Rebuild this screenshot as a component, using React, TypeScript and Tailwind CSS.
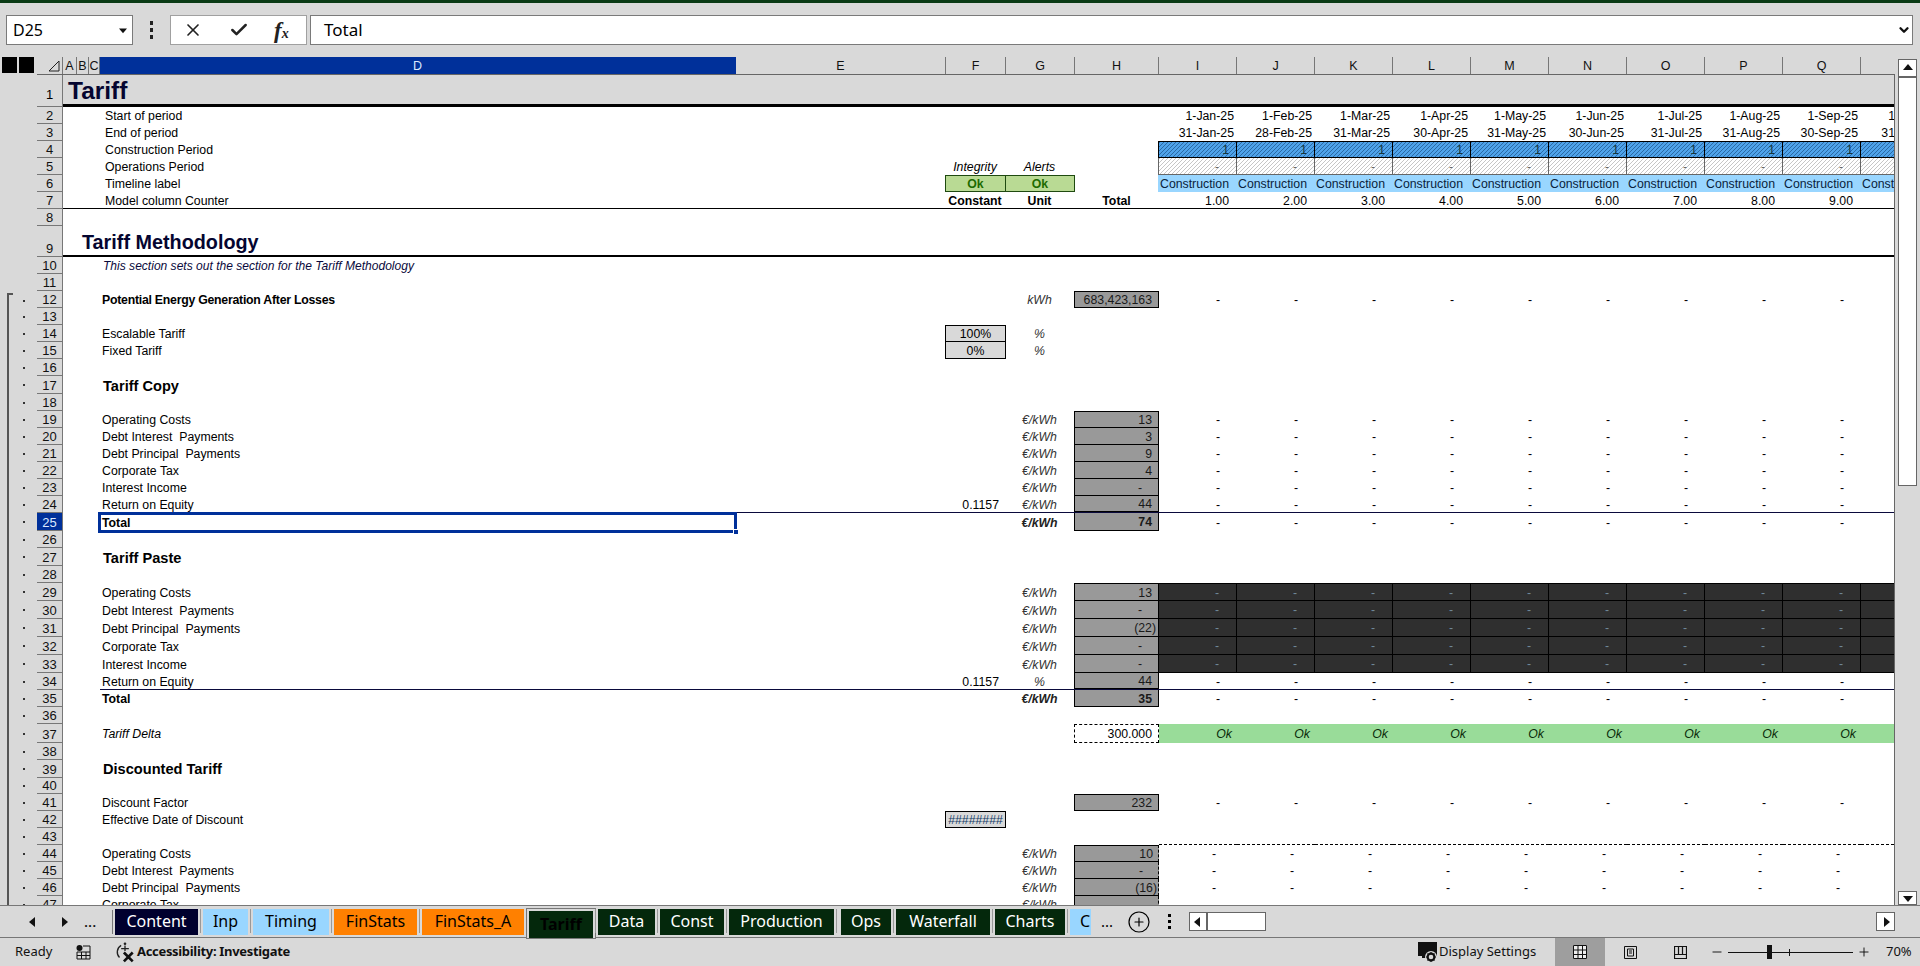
import React from 'react';
import { Check, ChevronDown, CirclePlus, Minus, Plus, X } from 'lucide-react';

const arial = "font-['Liberation_Sans',Arial,sans-serif]";
const segoe = "font-['Noto_Sans',sans-serif]";

const cols = ['I', 'J', 'K', 'L', 'M', 'N', 'O', 'P', 'Q', 'R'];
const starts = ['1-Jan-25', '1-Feb-25', '1-Mar-25', '1-Apr-25', '1-May-25', '1-Jun-25', '1-Jul-25', '1-Aug-25', '1-Sep-25', '1-Oct-25'];
const ends = ['31-Jan-25', '28-Feb-25', '31-Mar-25', '30-Apr-25', '31-May-25', '30-Jun-25', '31-Jul-25', '31-Aug-25', '30-Sep-25', '31-Oct-25'];

// timeline cell variants
type Tl = 'start' | 'end' | 'con' | 'ops' | 'label' | 'count' | 'dash' | 'dash2' | 'dark' | 'darkTop' | 'ok' | 'dashLine';

type RowDef = {
  n: number;
  h?: string;
  label?: string;
  labelCls?: string;
  f?: string;
  fCls?: string;
  g?: string;
  gCls?: string;
  hv?: string;
  hCls?: string;
  tl?: Tl;
  full?: string; // line across row from col A
  part?: string; // line across row from col D
};

const unit = 'italic text-[#333333] justify-center';
const unitB = 'italic font-bold text-[#222222] justify-center';
const box = 'bg-[#999999] border-x border-b border-black justify-end pr-[6px] text-[#1a1a1a]';
const boxT = 'bg-[#999999] border border-black justify-end pr-[6px] text-[#1a1a1a]';
const boxDash = 'bg-[#999999] border-l border-b border-black justify-end pr-[6px] text-[#1a1a1a]';
const dashH = '!pr-[16px]';
const inp = 'bg-[#d9d9d9] border-x border-b border-black justify-center !w-[61px] -mr-[1px]';
const inpT = 'bg-[#d9d9d9] border border-black justify-center !w-[61px] -mr-[1px]';
const okBox = 'bg-[#b9da94] border border-[#1f4a10] justify-center font-bold text-[#1d6b00]';
const plain = 'pl-[2px]';
const bold = 'pl-[2px] font-bold';
const head = 'pl-[3px] font-bold text-[14.6px] text-black';
const top = 'pl-[5px]';

const rows: RowDef[] = [
  { n: 2, label: 'Start of period', labelCls: top, tl: 'start' },
  { n: 3, label: 'End of period', labelCls: top, tl: 'end' },
  { n: 4, label: 'Construction Period', labelCls: top, tl: 'con' },
  { n: 5, label: 'Operations Period', labelCls: top, f: 'Integrity', fCls: 'italic justify-center', g: 'Alerts', gCls: 'italic justify-center', tl: 'ops' },
  { n: 6, label: 'Timeline label', labelCls: top, f: 'Ok', fCls: okBox + ' !w-[61px] -mr-[1px]', g: 'Ok', gCls: okBox + ' border-l-0 ml-[1px] -mr-[1px]', tl: 'label' },
  { n: 7, label: 'Model column Counter', labelCls: top, f: 'Constant', fCls: 'font-bold justify-center', g: 'Unit', gCls: 'font-bold justify-center', hv: 'Total', hCls: 'font-bold justify-center', tl: 'count', full: 'border-b border-black' },
  { n: 8 },
  { n: 9, h: 'h-[31px]', label: 'Tariff Methodology', labelCls: '-ml-[18px] !pt-[5px] font-bold text-[19.8px] text-[#050530]', full: 'border-b-2 border-black' },
  { n: 10, label: 'This section sets out the section for the Tariff Methodology', labelCls: 'pl-[3px] italic text-[12.05px] text-[#0a0a3c]' },
  { n: 11 },
  { n: 12, label: 'Potential Energy Generation After Losses', labelCls: bold + ' tracking-[-0.25px]', g: 'kWh', gCls: unit, hv: '683,423,163', hCls: boxT, tl: 'dash' },
  { n: 13 },
  { n: 14, label: 'Escalable Tariff', labelCls: plain, f: '100%', fCls: inpT, g: '%', gCls: unit },
  { n: 15, label: 'Fixed Tariff', labelCls: plain, f: '0%', fCls: inp, g: '%', gCls: unit },
  { n: 16 },
  { n: 17, h: 'h-[18px]', label: 'Tariff Copy', labelCls: head + ' !pt-[4px]' },
  { n: 18 },
  { n: 19, label: 'Operating Costs', labelCls: plain, g: '€/kWh', gCls: unit, hv: '13', hCls: boxT, tl: 'dash' },
  { n: 20, label: 'Debt Interest  Payments', labelCls: plain, g: '€/kWh', gCls: unit, hv: '3', hCls: box, tl: 'dash' },
  { n: 21, label: 'Debt Principal  Payments', labelCls: plain, g: '€/kWh', gCls: unit, hv: '9', hCls: box, tl: 'dash' },
  { n: 22, label: 'Corporate Tax', labelCls: plain, g: '€/kWh', gCls: unit, hv: '4', hCls: box, tl: 'dash' },
  { n: 23, label: 'Interest Income', labelCls: plain, g: '€/kWh', gCls: unit, hv: '-', hCls: box + ' ' + dashH, tl: 'dash' },
  { n: 24, label: 'Return on Equity', labelCls: plain, f: '0.1157', fCls: 'justify-end pr-[6px]', g: '€/kWh', gCls: unit, hv: '44', hCls: box, tl: 'dash', part: 'border-b border-[#0a0a3c]' },
  { n: 25, h: 'h-[18px]', label: 'Total', labelCls: bold, g: '€/kWh', gCls: unitB, hv: '74', hCls: box + ' font-bold', tl: 'dash' },
  { n: 26 },
  { n: 27, h: 'h-[18px]', label: 'Tariff Paste', labelCls: head + ' !pt-[4px]' },
  { n: 28 },
  { n: 29, h: 'h-[18px]', label: 'Operating Costs', labelCls: plain, g: '€/kWh', gCls: unit, hv: '13', hCls: boxT, tl: 'darkTop' },
  { n: 30, h: 'h-[18px]', label: 'Debt Interest  Payments', labelCls: plain, g: '€/kWh', gCls: unit, hv: '-', hCls: box + ' ' + dashH, tl: 'dark' },
  { n: 31, h: 'h-[18px]', label: 'Debt Principal  Payments', labelCls: plain, g: '€/kWh', gCls: unit, hv: '(22)', hCls: box + ' !pr-[2px]', tl: 'dark' },
  { n: 32, h: 'h-[18px]', label: 'Corporate Tax', labelCls: plain, g: '€/kWh', gCls: unit, hv: '-', hCls: box + ' ' + dashH, tl: 'dark' },
  { n: 33, h: 'h-[18px]', label: 'Interest Income', labelCls: plain, g: '€/kWh', gCls: unit, hv: '-', hCls: box + ' ' + dashH, tl: 'dark' },
  { n: 34, label: 'Return on Equity', labelCls: plain, f: '0.1157', fCls: 'justify-end pr-[6px]', g: '%', gCls: unit, hv: '44', hCls: box, tl: 'dash', part: 'border-b border-[#0a0a3c]' },
  { n: 35, label: 'Total', labelCls: bold, g: '€/kWh', gCls: unitB, hv: '35', hCls: box + ' font-bold', tl: 'dash' },
  { n: 36 },
  { n: 37, h: 'h-[19px]', label: 'Tariff Delta', labelCls: 'pl-[2px] italic', hv: '300.000', hCls: 'bg-white border border-dashed border-black justify-end pr-[6px]', tl: 'ok' },
  { n: 38 },
  { n: 39, h: 'h-[18px]', label: 'Discounted Tariff', labelCls: head },
  { n: 40, h: 'h-[16px]' },
  { n: 41, label: 'Discount Factor', labelCls: plain, hv: '232', hCls: boxT, tl: 'dash' },
  { n: 42, label: 'Effective Date of Discount', labelCls: plain, f: '########', fCls: inpT + ' text-[#123a66]' },
  { n: 43, tl: 'dashLine' },
  { n: 44, label: 'Operating Costs', labelCls: plain, g: '€/kWh', gCls: unit, hv: '10', hCls: boxDash + ' border-t', tl: 'dash2' },
  { n: 45, label: 'Debt Interest  Payments', labelCls: plain, g: '€/kWh', gCls: unit, hv: '-', hCls: boxDash + ' ' + dashH, tl: 'dash2' },
  { n: 46, label: 'Debt Principal  Payments', labelCls: plain, g: '€/kWh', gCls: unit, hv: '(16)', hCls: boxDash + ' !pr-[2px]', tl: 'dash2' },
  { n: 47, label: 'Corporate Tax', labelCls: plain, g: '€/kWh', gCls: unit, hCls: boxDash, tl: 'dash2' },
];

function TimelineCell({ kind, i }: { kind: Tl; i: number }) {
  const base = 'shrink-0 h-full flex items-center pt-[2px] whitespace-nowrap overflow-hidden';
  const w = 'w-[78px]';
  // first column reaches back over the H column's right edge
  const first = i === 0 ? 'w-[79px] -ml-[1px]' : 'w-[78px]';
  switch (kind) {
    case 'start':
      return <div className={`${base} ${w} justify-end pr-[3px] text-black`}>{starts[i]}</div>;
    case 'end':
      return <div className={`${base} ${w} justify-end pr-[3px] text-black`}>{ends[i]}</div>;
    case 'con':
      return (
        <div className={`${base} ${first} justify-end pr-[7px] text-[#17363c] border-y border-r border-black ${i === 0 ? 'border-l' : ''} bg-[repeating-linear-gradient(135deg,#2a6aa5_0,#2a6aa5_0.8px,#4fa3ea_0.8px,#4fa3ea_2.83px)]`}>
          1
        </div>
      );
    case 'ops':
      return (
        <div className={`${base} ${first} justify-end pr-[17px] text-[#666666] border-r border-b border-[#666666] ${i === 0 ? 'border-l' : ''} bg-[repeating-linear-gradient(135deg,#c6c6c6_0,#c6c6c6_0.8px,#ffffff_0.8px,#ffffff_2.83px)]`}>
          -
        </div>
      );
    case 'label':
      return <div className={`${base} ${first} ${i === 0 ? 'pl-[2px]' : 'pl-[1px]'} bg-[#99d6ff] text-[#0a1e3c]`}>Construction</div>;
    case 'count':
      return <div className={`${base} ${w} justify-end pr-[8px] text-black`}>{(i + 1).toFixed(2)}</div>;
    case 'dash':
      return <div className={`${base} ${w} justify-end pr-[17px] text-black`}>-</div>;
    case 'dash2':
      return <div className={`${base} ${first} justify-end pr-[21px] text-black ${i === 0 ? 'border-l border-dashed border-black' : ''}`}>-</div>;
    case 'dark':
      return <div className={`${base} ${w} justify-end pr-[17px] bg-[#2f2f2f] text-[#6f8797] border-r border-b border-black`}>-</div>;
    case 'darkTop':
      return <div className={`${base} ${w} justify-end pr-[17px] bg-[#2f2f2f] text-[#6f8797] border-r border-y border-black`}>-</div>;
    case 'ok':
      return <div className={`${base} ${w} justify-end pr-[5px] bg-[#99dc99] italic text-[#0a2a0a]`}>Ok</div>;
    case 'dashLine':
      return <div className={`${base} ${w} border-b border-dashed border-black`} />;
  }
}

function Row({ r }: { r: RowDef }) {
  const cell = 'shrink-0 h-full flex items-center pt-[2px] whitespace-nowrap';
  const selected = r.n === 25;
  return (
    <div className={`flex ${r.h ?? 'h-[17px]'}`}>
      <div className="w-[37px] shrink-0 bg-[#d9d9d9] pl-[7px]">
        {r.n >= 12 && (
          <div className={`relative border-l-2 border-[#555555] flex items-center pl-[14px] ${r.n === 12 ? 'h-[15px] mt-[2px]' : 'h-full'}`}>
            <div className="w-[2px] h-[2px] bg-[#333333]" />
            {r.n === 12 && <div className="absolute -left-[2px] top-0 w-[6px] h-[2px] bg-[#555555]" />}
          </div>
        )}
      </div>
      <div className={`w-[26px] shrink-0 flex items-end justify-center border-b border-r border-[#777777] text-[13px] leading-[15px] ${selected ? 'bg-[#00309a] text-[#dbe9ff]' : 'bg-[#d9d9d9] text-[#111111]'}`}>
        {r.n}
      </div>
      <div className={`flex-1 min-w-0 flex bg-white text-[12.3px] text-black ${r.full ?? ''}`}>
        <div className="w-[37px] shrink-0" />
        <div className={`flex flex-1 min-w-0 ${r.part ?? ''}`}>
          <div className={`${cell} w-[636px] relative whitespace-pre ${r.labelCls ?? ''}`}>
            {r.label}
            {selected && (
              <div className="absolute -left-[2px] -top-[1px] -right-[1px] -bottom-[2px] border-[3px] border-[#00309a] z-10">
                <div className="absolute -right-[5px] -bottom-[5px] w-[6px] h-[6px] bg-[#00309a] border border-white" />
              </div>
            )}
          </div>
          <div className={`${cell} w-[209px]`} />
          <div className={`${cell} w-[60px] ${r.fCls ?? ''}`}>{r.f}</div>
          <div className={`${cell} w-[69px] ${r.gCls ?? ''}`}>{r.g}</div>
          <div className={`${cell} w-[85px] ${r.hCls ?? ''}`}>{r.hv}</div>
          {r.tl && cols.map((c, i) => <TimelineCell key={c} kind={r.tl as Tl} i={i} />)}
        </div>
      </div>
    </div>
  );
}

function Tri({ dir, size = 8 }: { dir: 'l' | 'r' | 'u' | 'd'; size?: number }) {
  const pts = { l: '7,0 7,10 1,5', r: '3,0 3,10 9,5', u: '0,7 10,7 5,1', d: '0,3 10,3 5,9' }[dir];
  return (
    <svg width={size} height={size} viewBox="0 0 10 10">
      <polygon points={pts} fill="#111" />
    </svg>
  );
}

function ColHeader({ w, label, active }: { w: string; label: string; active?: boolean }) {
  return (
    <div className={`${w} shrink-0 h-full flex items-center justify-center pt-[2px] border-r ${active ? 'bg-[#00309a] text-[#dbe9ff] border-[#00309a]' : 'border-[#777777] text-[#111111]'}`}>
      {label}
    </div>
  );
}

function HeaderRow() {
  return (
    <div className={`flex h-[18px] text-[12.5px] ${arial}`}>
      <div className="w-[37px] shrink-0 flex pl-[2px] gap-[2px]">
        <div className="w-[15px] h-[16px] bg-black" />
        <div className="w-[15px] h-[16px] bg-black" />
      </div>
      <div className="flex flex-1 min-w-0 border-b border-[#666666] overflow-hidden">
        <div className="w-[26px] shrink-0 border-r border-[#777777] flex items-end justify-end pr-[2px] pb-[2px]">
          <svg width="12" height="12" viewBox="0 0 12 12">
            <path d="M11 1V11H1Z" fill="none" stroke="#222" strokeWidth="1" />
          </svg>
        </div>
        <ColHeader w="w-[14px]" label="A" />
        <ColHeader w="w-[12px]" label="B" />
        <ColHeader w="w-[11px]" label="C" />
        <ColHeader w="w-[636px]" label="D" active />
        <ColHeader w="w-[210px]" label="E" />
        <ColHeader w="w-[60px]" label="F" />
        <ColHeader w="w-[69px]" label="G" />
        <ColHeader w="w-[84px]" label="H" />
        {cols.slice(0, 9).map((c) => (
          <ColHeader key={c} w="w-[78px]" label={c} />
        ))}
      </div>
    </div>
  );
}

const tabs = [
  { t: 'Content', c: 'w-[83px] bg-[#00002e] text-white' },
  { t: 'Inp', c: 'w-[45px] bg-[#99d6ff] text-black' },
  { t: 'Timing', c: 'w-[76px] bg-[#99d6ff] text-black' },
  { t: 'FinStats', c: 'w-[83px] bg-[#ff8000] text-black' },
  { t: 'FinStats_A', c: 'w-[102px] bg-[#ff8000] text-black' },
  { t: 'Tariff', c: 'w-[68px] -ml-[2px] -mr-[2px] h-[29px] bg-[#04280c] text-black font-bold border-2 border-b-0 border-[#d9d9d9] outline outline-1 outline-[#777777]' },
  { t: 'Data', c: 'w-[57px] bg-[#04280c] text-white' },
  { t: 'Const', c: 'w-[64px] bg-[#04280c] text-white' },
  { t: 'Production', c: 'w-[105px] bg-[#04280c] text-white' },
  { t: 'Ops', c: 'w-[50px] ml-[2px] bg-[#04280c] text-white' },
  { t: 'Waterfall', c: 'w-[94px] bg-[#04280c] text-white' },
  { t: 'Charts', c: 'w-[70px] bg-[#04280c] text-white' },
  { t: 'C', c: 'w-[21px] bg-[#99d6ff] text-black pl-[10px] !justify-start overflow-hidden' },
];

function TabBar() {
  return (
    <div className={`h-[33px] shrink-0 flex items-center border-y border-[#777777] ${segoe}`}>
      <div className="w-[112px] shrink-0 h-full flex items-center text-[#111111]">
        <div className="ml-[28px] w-[8px]"><Tri dir="l" size={10} /></div>
        <div className="ml-[23px] w-[8px]"><Tri dir="r" size={10} /></div>
        <div className="ml-[17px] text-[15px] font-medium">...</div>
      </div>
      <div className="w-[1px] h-[24px] bg-[#777777] mr-[2px]" />
      <div className="flex items-start h-[26px] -mb-[1px]">
        {tabs.map((tab, i) => (
          <React.Fragment key={tab.t}>
            {i > 0 && <div className="w-[1px] h-[24px] bg-[#999999] mx-[2px]" />}
            <div className={`h-[26px] shrink-0 flex items-center justify-center pb-[2px] text-[16px] ${tab.c}`}>{tab.t}</div>
          </React.Fragment>
        ))}
      </div>
      <div className="ml-[10px] text-[15px] text-black">...</div>
      <div className="ml-[14px]"><CirclePlus size={24} strokeWidth={1.2} className="text-black" /></div>
      <div className="ml-[17px] flex flex-col gap-[3px]">
        <div className="w-[3px] h-[3px] bg-black" />
        <div className="w-[3px] h-[3px] bg-black" />
        <div className="w-[3px] h-[3px] bg-black" />
      </div>
      <div className="ml-[18px] w-[77px] h-[19px] bg-white border border-[#666666] flex">
        <div className="w-[18px] border-r-2 border-[#666666] flex items-center justify-center"><Tri dir="l" size={10} /></div>
      </div>
      <div className="ml-auto mr-[25px] w-[19px] h-[19px] bg-white border border-[#666666] flex items-center justify-center"><Tri dir="r" size={10} /></div>
    </div>
  );
}

function StatusBar() {
  return (
    <div className={`h-[28px] shrink-0 flex items-center text-[13px] text-[#111111] ${segoe}`}>
      <div className="ml-[15px] w-[61px]">Ready</div>
      <svg className="w-[15px] h-[15px] mr-[23px]" viewBox="0 0 15 15">
        <circle cx="3.5" cy="3" r="3" fill="#111" />
        <path d="M7 1h7v13H1V7h13M1 10.5h13M5.5 7v7M10 7v7" fill="none" stroke="#111" strokeWidth="1" />
      </svg>
      <svg className="w-[22px] h-[22px] mr-[1px]" viewBox="0 0 20 20">
        <path d="M6.5 4A7 7 0 0 0 5 15" fill="none" stroke="#222" strokeWidth="1.2" />
        <circle cx="10" cy="2.5" r="1.2" fill="#222" />
        <path d="M10 4v5M6.5 7h7" fill="none" stroke="#222" strokeWidth="1.2" />
        <path d="M9 10.5l8 8M17 10.5l-8 8" fill="none" stroke="#111" strokeWidth="2.4" />
      </svg>
      <div className="font-bold tracking-[-0.32px]">Accessibility: Investigate</div>
      <div className="ml-auto flex items-center h-full">
        <div className="w-[137px] flex items-center">
          <svg className="w-[21px] h-[20px]" viewBox="0 0 21 20">
            <rect x="0" y="0" width="19" height="14" fill="#111" />
            <rect x="4" y="14" width="8" height="2" fill="#111" />
            <circle cx="13" cy="15" r="6" fill="#d9d9d9" />
            <circle cx="13" cy="15" r="3.4" fill="none" stroke="#111" strokeWidth="2.2" />
            <path d="M13 10v2M13 18v2M8 15h2M16 15h2M9.5 11.5l1.4 1.4M15.1 17.1l1.4 1.4M16.5 11.5l-1.4 1.4M10.9 17.1l-1.4 1.4" stroke="#111" strokeWidth="1.2" />
          </svg>
          <span>Display Settings</span>
        </div>
        <div className="w-[50px] h-full bg-[#9e9e9e] flex items-center justify-center">
          <svg width="14" height="14" viewBox="0 0 14 14">
            <rect x="0" y="0" width="14" height="14" fill="#eee" />
            <path d="M.5.5h13v13H.5zM.5 5h13M.5 9.5h13M5 .5v13M9.5.5v13" fill="none" stroke="#111" strokeWidth="1" />
          </svg>
        </div>
        <div className="w-[50px] h-full flex items-center justify-center">
          <svg width="13" height="13" viewBox="0 0 13 13">
            <path d="M.5.5h12v12H.5zM3.5 3h6v7h-6zM5 5h3M5 7h3" fill="none" stroke="#111" strokeWidth="1" />
          </svg>
        </div>
        <div className="w-[50px] h-full flex items-center justify-center">
          <svg width="13" height="13" viewBox="0 0 13 13">
            <path d="M.5.5h12v12H.5zM.5 8.5h12M4.5.5v8M8.5.5v8" fill="none" stroke="#111" strokeWidth="1.2" />
          </svg>
        </div>
        <div className="w-[215px] h-full flex items-center">
          <Minus size={14} strokeWidth={1.5} className="ml-[5px] text-black" />
          <div className="relative ml-[4px] w-[125px] h-[1px] bg-[#111111]">
            <div className="absolute left-[39px] -top-[7px] w-[5px] h-[14px] bg-[#111111]" />
            <div className="absolute left-[61px] -top-[3px] w-[1px] h-[7px] bg-[#111111]" />
          </div>
          <Plus size={14} strokeWidth={1.5} className="ml-[4px] text-black" />
          <div className="ml-[15px] text-[13px]">70%</div>
        </div>
      </div>
    </div>
  );
}

function FormulaBar() {
  return (
    <div className="flex h-[30px] mt-[12px] pl-[6px] pr-[7px] shrink-0">
      <div className={`w-[127px] h-full bg-white border border-[#7a7a7a] flex items-center pl-[6px] text-[16px] ${segoe}`}>
        D25
        <div className="ml-auto mr-[5px]"><Tri dir="d" size={8} /></div>
      </div>
      <div className="w-[37px] flex flex-col items-center justify-center gap-[3px]">
        <div className="w-[3px] h-[4px] bg-[#222222]" />
        <div className="w-[3px] h-[4px] bg-[#222222]" />
        <div className="w-[3px] h-[4px] bg-[#222222]" />
      </div>
      <div className="w-[137px] h-full bg-white border border-[#a0a0a0] flex items-center">
        <X size={20} strokeWidth={2} className="ml-[12px] text-[#222222]" />
        <Check size={20} strokeWidth={3} className="ml-[26px] text-[#222222]" />
        <span className="ml-[25px] font-['Liberation_Serif',serif] italic font-bold text-[#222222] leading-none">
          <span className="text-[23px]">f</span>
          <span className="text-[14px]">x</span>
        </span>
      </div>
      <div className={`flex-1 ml-[3px] h-full bg-white border border-[#7a7a7a] flex items-center pl-[13px] text-[17px] ${segoe}`}>
        Total
        <ChevronDown size={14} strokeWidth={4} className="ml-auto mr-[1px] text-[#111111]" />
      </div>
    </div>
  );
}

export default function App() {
  return (
    <div className={`w-[1920px] h-[966px] overflow-hidden flex flex-col bg-[#d9d9d9] ${arial}`}>
      <div className="h-[3px] shrink-0 bg-[#0a3a14]" />
      <FormulaBar />
      <div className="h-[12px] shrink-0" />
      <div className="flex flex-1 min-h-0">
        <div className="w-[1895px] shrink-0 flex flex-col">
          <HeaderRow />
          <div className="flex-1 min-h-0 overflow-hidden border-r border-[#666666]">
            <div className="flex h-[32px]">
              <div className="w-[37px] shrink-0" />
              <div className="w-[26px] shrink-0 flex items-end justify-center pb-[2px] border-b border-r border-[#777777] text-[13px]">1</div>
              <div className="flex-1 flex items-center pl-[5px] pt-[3px] border-b-[3px] border-black font-bold text-[24.5px] text-[#050530]">Tariff</div>
            </div>
            {rows.map((r) => (
              <Row key={r.n} r={r} />
            ))}
          </div>
        </div>
        <div className="w-[25px] shrink-0 pl-[3px] pt-[2px] pr-[3px] flex flex-col">
          <div className="h-[19px] shrink-0 bg-white border border-[#666666] border-b-2 flex items-center justify-center"><Tri dir="u" size={10} /></div>
          <div className="h-[408px] shrink-0 bg-white border-x border-b border-[#666666]" />
          <div className="flex-1" />
          <div className="h-[14px] shrink-0 bg-white border border-[#666666] flex items-center justify-center"><Tri dir="d" size={10} /></div>
        </div>
      </div>
      <TabBar />
      <StatusBar />
    </div>
  );
}
